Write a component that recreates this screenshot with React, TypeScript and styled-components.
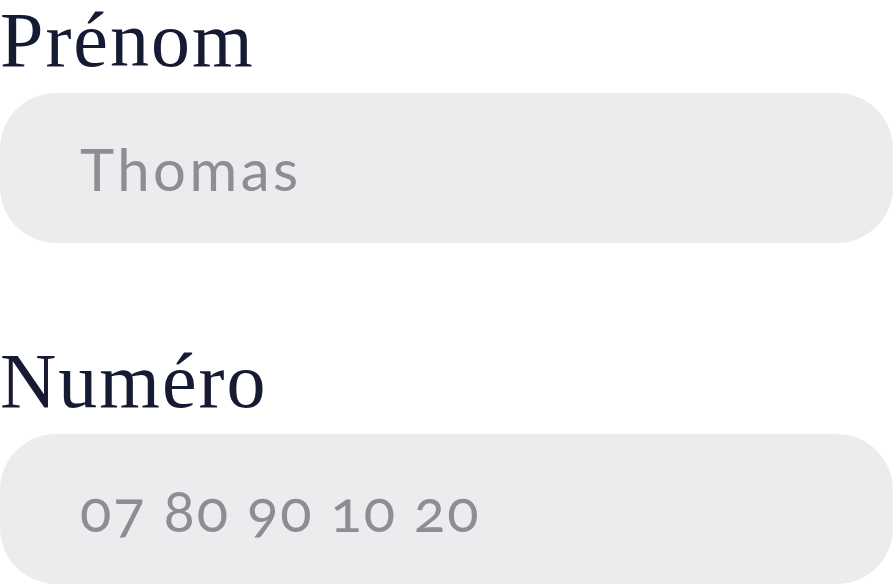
import styled, { createGlobalStyle } from 'styled-components';

const GlobalStyle = createGlobalStyle`
	html, body {
		margin: 0;
		padding: 0;
		background: #ffffff;
	}
	* {
		box-sizing: border-box;
	}
`;

const fields = [
	{ id: 'prenom', label: 'Prénom', placeholder: 'Thomas', type: 'text', tracking: 3.5 },
	{ id: 'numero', label: 'Numéro', placeholder: '07 80 90 10 20', type: 'tel', tracking: 2 },
];

export default function App() {
	return (
		<>
			<GlobalStyle />
			<Form>
				{fields.map((field) => (
					<Field key={field.id}>
						<Label htmlFor={field.id}>{field.label}</Label>
						<Input
							id={field.id}
							name={field.id}
							type={field.type}
							placeholder={field.placeholder}
							$tracking={field.tracking}
						/>
					</Field>
				))}
			</Form>
		</>
	);
}

const Form = styled.form`
	display: flex;
	flex-direction: column;
	gap: 99px;
	width: 893px;
	padding-top: 1px;
`;

const Field = styled.div`
	display: flex;
	flex-direction: column;
	gap: 14px;
`;

const Label = styled.label`
	font-family: 'Liberation Serif', 'Times New Roman', serif;
	font-size: 78px;
	line-height: 1;
	color: #161b33;
	letter-spacing: 2px;
`;

const Input = styled.input<{ $tracking: number }>`
	width: 100%;
	height: 150px;
	border: none;
	outline: none;
	border-radius: 56px;
	background: #edebee;
	padding: 0 0 0 80px;
	font-family: Lato, 'Noto Sans', sans-serif;
	font-size: 58px;
	font-variant-numeric: oldstyle-nums;
	letter-spacing: ${({ $tracking }) => $tracking}px;
	color: #8f8d91;

	&::placeholder {
		color: #8f8d91;
		opacity: 1;
	}
`;
